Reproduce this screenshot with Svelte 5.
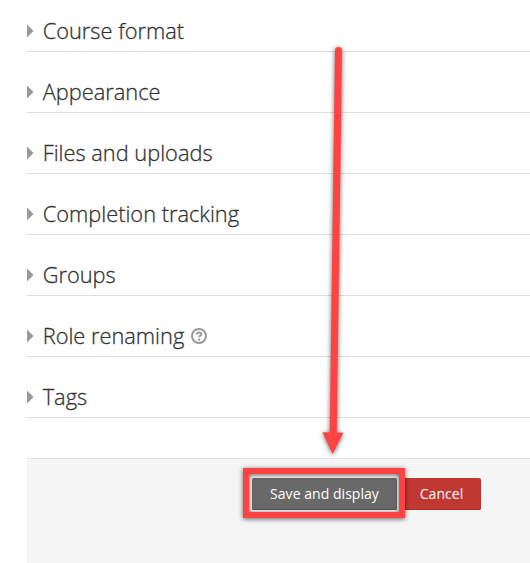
<script lang="ts">
  type Section = { title: string; help?: boolean };

  const sections: Section[] = [
    { title: 'Course format' },
    { title: 'Appearance' },
    { title: 'Files and uploads' },
    { title: 'Completion tracking' },
    { title: 'Groups' },
    { title: 'Role renaming', help: true },
    { title: 'Tags' },
  ];
</script>

<div class="page">
  <form class="settings" onsubmit={(e) => e.preventDefault()}>
    {#each sections as section}
      <div class="section">
        <svg class="caret" width="7" height="14" viewBox="0 0 7 14" aria-hidden="true">
          <path d="M0 0.5L6.5 7L0 13.5Z" fill="#999" />
        </svg>
        <span class="title">{section.title}</span>
        {#if section.help}
          <svg class="help" width="16" height="16" viewBox="0 0 16 16" aria-label="Help">
            <circle cx="8" cy="8" r="7" fill="none" stroke="#999" stroke-width="2" />
            <path d="M5.7 6.5C5.9 4.9 6.8 4.4 8 4.4C9.3 4.4 10.2 5.1 10.2 6.2C10.2 7.6 8.1 7.6 8.1 9.3" fill="none" stroke="#999" stroke-width="2" />
            <path d="M7 10.7H9.2V12.6H7Z" fill="#999" />
          </svg>
        {/if}
      </div>
    {/each}

    <div class="actions">
      <button type="submit" class="btn save">Save and display</button>
      <button type="button" class="btn cancel">Cancel</button>
    </div>
  </form>

  <!-- Pointer and frame laid over the form -->
  <svg class="callout" width="530" height="563" viewBox="0 0 530 563" aria-hidden="true">
    <g class="marker">
      <path d="M338.5 50.5L333.2 435" fill="none" stroke="#ff4343" stroke-width="7" stroke-linecap="round" />
      <path d="M322.5 432.3L343.3 432.7L332.6 454Z" fill="#ff4343" />
    </g>
    <rect class="marker" x="246" y="471" width="156" height="44" fill="none" stroke="#ff4343" stroke-width="6" />
  </svg>
</div>

<style>
  :global(body) { margin: 0; background: #fff; }

  .page {
    position: relative;
    width: 530px;
    height: 563px;
    overflow: hidden;
    background: #fff;
    font-family: "Open Sans", "Noto Sans", sans-serif;
  }

  .settings {
    display: flex;
    flex-direction: column;
    height: 100%;
    padding-left: 27px;
    box-sizing: border-box;
  }

  .section {
    display: flex;
    align-items: center;
    flex-shrink: 0;
    height: 61px;
    padding-top: 20px;
    box-sizing: border-box;
    border-bottom: 1px solid #ddd;
  }
  .section:first-child { height: 52px; padding-top: 11px; }
  .caret { margin-right: 8.7px; }
  .title {
    font-size: 21.8px;
    font-weight: 300;
    line-height: 30px;
    color: #333;
    -webkit-text-stroke: 0.3px #333;
  }
  .help { margin-left: 7px; }

  .actions {
    display: flex;
    align-items: flex-start;
    gap: 5px;
    flex: 1;
    margin-top: 40px;
    padding: 19px 0 0 225px;
    border-top: 1px solid #e3e3e3;
    background: #f5f5f5;
  }

  .btn {
    height: 32px;
    padding: 0;
    border: 0;
    border-radius: 2px;
    color: #fff;
    font-family: inherit;
    font-size: 14px;
    line-height: 32px;
    letter-spacing: 0.04px;
    white-space: nowrap;
  }
  .save { width: 145px; background: #696969; box-shadow: inset 0 -1px #585858; }
  .cancel { width: 79px; background: #c13832; box-shadow: inset 0 -1px #a5302b; }

  .callout {
    position: absolute;
    top: 0;
    left: 0;
    pointer-events: none;
  }
  .marker { filter: drop-shadow(0 1px 2.5px rgba(0, 0, 0, 0.6)); }
</style>
